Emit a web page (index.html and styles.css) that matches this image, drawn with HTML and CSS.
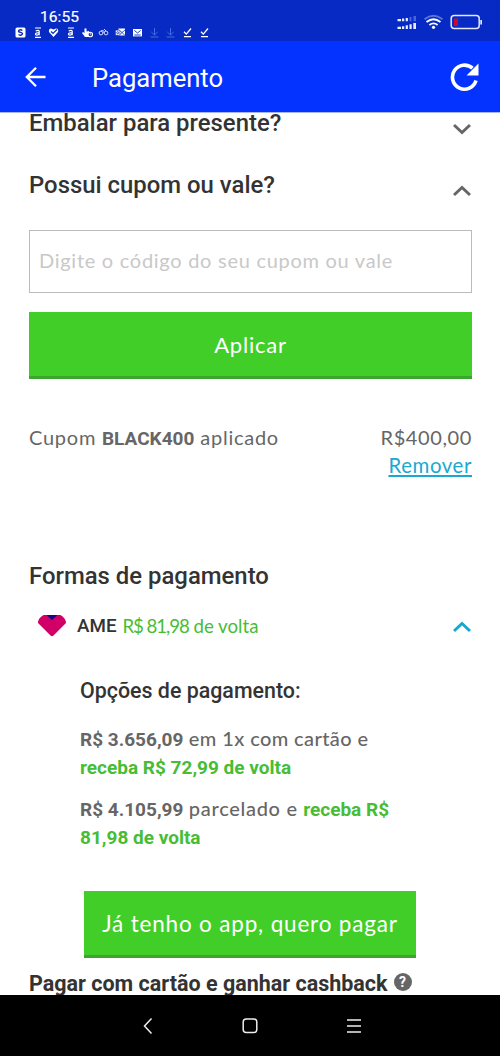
FILE: index.html
```html
<!DOCTYPE html>
<html lang="pt-BR">
<head>
<meta charset="utf-8">
<title>Pagamento</title>
<link rel="stylesheet" href="styles.css">
</head>
<body>
<div class="screen">
  <div class="status">
    <div class="status-left">
      <div class="clock">16:55</div>
      <div class="notifications">
        <svg viewBox="0 0 11 11"><rect x=".5" y=".5" width="10" height="10" rx="1.5" fill="#fff"/><path d="M7.4 3.5Q5.5 2 4 3.3T5.5 5.4 7 7.6 3.6 7.5" fill="none" stroke="#0b2cb8" stroke-width="1.4"/></svg>
        <svg viewBox="0 0 11 11" fill="none" stroke="#fff"><path d="M3 1h6M3 10.3h6M3.7 4q3.3-1.6 3.5.4v3.8M7.2 5.7Q3.3 5.6 3.5 7.3q1.2 1.7 3.7-.4" stroke-width="1.2"/></svg>
        <svg viewBox="0 0 11 11"><path d="M5.5 10 1 5Q.5 1.5 3 1.5l2.5 1 2.5-1q3 0 2 3.5z" fill="#fff"/><path d="M3 4.5 5 6.5 9 2.5" fill="none" stroke="#0b2cb8" stroke-width="1.2"/></svg>
        <svg viewBox="0 0 11 11" fill="none" stroke="#fff"><path d="M3 1h6M3 10.3h6M3.7 4q3.3-1.6 3.5.4v3.8M7.2 5.7Q3.3 5.6 3.5 7.3q1.2 1.7 3.7-.4" stroke-width="1.2"/></svg>
        <svg viewBox="0 0 11 11"><path d="M2.5 1.5h2v3L7 4l1 6H3L0 6l1-1 1.5 1z" fill="#fff"/><circle cx="8.3" cy="7.5" r="2.3" fill="#0b2cb8" stroke="#fff" stroke-width="1.1"/><path d="M8.3 6v1.6h1" fill="none" stroke="#fff" stroke-width=".7"/></svg>
        <svg viewBox="0 0 11 11" fill="none" stroke="#ced8fa"><circle cx="3" cy="6" r="1.9"/><circle cx="8" cy="6" r="1.9"/><path d="M3 4q3-2 3 2M6 2l2 2"/></svg>
        <svg viewBox="0 0 11 11"><path d="M3.5 1.5H10v7H3.5z" fill="#fff"/><path d="m4 3 3 2.5L10 3M4 8.5l3-3 3 3" fill="none" stroke="#0b2cb8" stroke-width=".8"/><path d="M.5 3.2h4.3v5H.5z" fill="#fff" stroke="#0b2cb8" stroke-width=".5"/><circle cx="2.7" cy="5.7" r="1" fill="none" stroke="#0b2cb8" stroke-width=".8"/></svg>
        <svg viewBox="0 0 11 11"><rect x="1" y="2" width="9" height="7.4" fill="#fff"/><path d="M2.3 3.4l3.2 2.6 3.200-2.600M2.300 8h6.400" fill="none" stroke="#0b2cb8" stroke-width=".9"/></svg>
        <svg class="dim" viewBox="0 0 11 11" fill="none" stroke="#5282ee"><path d="M5.5 1v7M2.3 5l3.2 3 3.2-3M1.5 10h8"/></svg>
        <svg class="dim" viewBox="0 0 11 11" fill="none" stroke="#5282ee"><path d="M5.5 1v7M2.3 5l3.2 3 3.2-3M1.5 10h8"/></svg>
        <svg viewBox="0 0 11 11" fill="none" stroke="#fff" stroke-width="1.3"><path d="m2 4.7 2.3 2.4L9 1.5M2 9.7h7"/></svg>
        <svg viewBox="0 0 11 11" fill="none" stroke="#fff" stroke-width="1.3"><path d="m2 4.7 2.3 2.4L9 1.5M2 9.7h7"/></svg>
      </div>
    </div>
    <svg class="indicators" width="86" height="18" viewBox="0 0 86 18">
      <g fill="#e8edff"><path d="M.5 6H4v2.300H.5zM5 5.500h2.200v2.800H5zM8.700 5h2.200v3.300H8.700z"/><path opacity=".3" d="M12.500 4h2v4.300h-2zM16.500 3H19v5.300h-2.500z"/><path d="M.5 13.800H4V16H.5zM5 13.300h2.200V16H5zM8.700 12.300h2.200V16H8.700zM12.500 11.300h2.200V16h-2.200zM16.300 10h2.700v6h-2.700z"/></g>
      <g fill="none" stroke="#fff" stroke-width="1.8"><path opacity=".35" d="M27.500 6.300q9-7 18 0"/><path d="M29.500 9q7-5.500 14 0M32.400 12q4.100-3.200 8.200 0"/></g><circle cx="36.500" cy="14.300" r="1.6" fill="#fff"/>
      <rect x="54.200" y="2.500" width="28" height="13" rx="3" fill="none" stroke="#e4e8ff" stroke-width="1.500"/><path d="M83.300 7H85v4.500h-1.700z" fill="#dfe5ff"/><path d="M57 5.500h4V13h-4z" fill="#c60b2c"/>
    </svg>
  </div>
  <header class="appbar">
    <svg width="22" height="22" viewBox="0 0 22 22" fill="none" stroke="#fff" stroke-width="2.300"><path d="M20.500 11H2.500M11 1.800 1.800 11l9.200 9.200"/></svg>
    <h1 class="title">Pagamento</h1>
    <svg width="30" height="30" viewBox="0 0 30 30"><path d="M26 18.500A12 12 0 1 1 22.500 6.200" fill="none" stroke="#fff" stroke-width="3.600"/><path d="M28.500 1.500V13.500H16.500z" fill="#fff"/></svg>
  </header>
  <main class="content">
    <div class="accordion first"><h2 class="heading">Embalar para presente?</h2><svg class="chevron" viewBox="0 0 18 12"><path d="m1 2 8 7.500L17 2"/></svg></div>
    <div class="accordion second"><h2 class="heading">Possui cupom ou vale?</h2><svg class="chevron" viewBox="0 0 18 12"><path d="m1 10 8-7.500L17 10"/></svg></div>
    <div class="field">Digite o código do seu cupom ou vale</div>
    <div class="button apply">Aplicar</div>
    <div class="applied">
      <div class="coupon">Cupom <b>BLACK400</b> aplicado</div>
      <div class="amount"><span>R$400,00</span><a class="remove">Remover</a></div>
    </div>
    <h2 class="heading">Formas de pagamento</h2>
    <div class="method">
      <svg width="28" height="22" viewBox="0 0 28 22"><path d="M5.500 0h17Q28 3.500 28 8L15.500 20.500q-1.500 1.500-3 0L0 8Q0 3 5.500 0z" fill="#d00066"/><path d="M8.500 0h11l-5.500 5z" fill="#15068f"/></svg>
      <span class="ame">AME</span><span class="refund"><span class="refund-price">R$ 81,98</span> de volta</span>
      <svg class="chevron blue" viewBox="0 0 18 12"><path d="m1 10 8-7.500L17 10"/></svg>
    </div>
    <section class="options">
      <h3 class="options-title">Opções de pagamento:</h3>
      <p class="option"><b>R$ 3.656,09</b> em 1x com cartão e<br><b class="gain">receba R$ 72,99 de volta</b></p>
      <p class="option"><b>R$ 4.105,99</b> <span class="split">parcelado e</span> <b class="gain">receba R$<br>81,98 de volta</b></p>
    </section>
    <div class="button pay">Já tenho o app, quero pagar</div>
    <div class="cashback"><span>Pagar com cartão e ganhar cashback</span><i class="help">?</i></div>
  </main>
  <nav class="nav">
    <svg width="220" height="18" viewBox="0 0 220 18" fill="none" stroke="#eee" stroke-width="1.500"><path d="m9.500 1.500-7 7.500 7 7.500"/><rect x="101.200" y="2" width="13.600" height="13.600" rx="3"/><path d="M205 3h14M205 9h14M205 15h14"/></svg>
  </nav>
</div>
</body>
</html>
```
FILE: styles.css
```css
* { box-sizing: border-box; }
body { margin: 0; background: #fff; font-family: Lato, sans-serif; color: #333; }
h1, h2, h3, p { margin: 0; font-weight: 500; }
svg { display: block; flex: none; }
.screen { width: 500px; height: 1056px; display: flex; flex-direction: column; overflow: hidden; }
.status { height: 41px; flex: none; background: #062ac3; display: flex; justify-content: space-between; padding: 0 17px 0 15px; }
.clock { height: 27px; padding: 8px 0 0 25px; font: 400 15.5px/19px Roboto, sans-serif; color: #fff; letter-spacing: .1px; -webkit-text-stroke: .2px #fff; }
.notifications { display: flex; gap: 5.7px; }
.notifications svg { width: 11px; height: 11px; }
.dim { opacity: .75; }
.indicators { margin-top: 13px; }
.appbar { height: 71px; flex: none; background: #0433ff; display: flex; align-items: center; padding: 0 20px 0 25px; }
.title { flex: 1; margin-left: 45px; padding-top: 2px; font: 400 25.6px/30px Roboto, sans-serif; color: #fff; }
.content { height: 883px; flex: none; border-top: 1px solid #a7b5ff; padding: 0 28px 0 29px; }
.heading { font: 500 23.9px/30px Roboto, sans-serif; }
.accordion { display: flex; justify-content: space-between; height: 62px; padding-right: 1px; }
.accordion.first { height: 58px; }
.first .heading { margin-top: -5px; }
.second .heading { margin-top: -1px; }
.first .chevron { margin-top: 10px; }
.second .chevron { margin-top: 14px; }
.chevron { width: 18px; height: 12px; fill: none; stroke: #666; stroke-width: 3; }
.field { height: 63px; margin-top: -3px; border: 1px solid #bbb; padding-left: 9px; font-size: 20px; line-height: 59px; letter-spacing: .72px; color: #c8c8c8; white-space: nowrap; }
.button { height: 67px; background: #42ce29; border-bottom: 3px solid #3ba62e; color: #fff; font-size: 22px; line-height: 65px; letter-spacing: .8px; text-align: center; white-space: nowrap; }
.apply { margin-top: 19px; }
.applied { display: flex; justify-content: space-between; margin-top: 44px; height: 138px; font-size: 20px; line-height: 28px; letter-spacing: .75px; color: #666; white-space: nowrap; }
.applied b, .option b { font: 700 19px/1 Roboto, sans-serif; letter-spacing: 0; }
.amount { display: flex; flex-direction: column; align-items: flex-end; letter-spacing: .6px; }
.remove { font-size: 20.4px; color: #1ba8d0; text-decoration: underline; text-underline-offset: 2px; }
.method { display: flex; align-items: center; height: 30px; margin-top: 20px; padding: 0 1px 0 9px; font: 500 18.8px/30px Roboto, sans-serif; }
.ame { margin-left: 11px; }
.refund { margin-left: 6px; font: 400 18.7px/30px Lato, sans-serif; color: #47bd35; }
.refund-price { letter-spacing: -1.1px; }
.blue { stroke: #12a9d2; margin: 2px 0 0 auto; }
.options { margin-left: 51px; padding-top: 35px; white-space: nowrap; }
.options-title { font: 500 21.4px/30px Roboto, sans-serif; }
.option { margin-top: 14px; font-size: 20px; line-height: 28px; letter-spacing: .4px; color: #666; }
.options-title + .option { margin-top: 18px; }
.split { letter-spacing: .7px; }
.option .gain { color: #47bd35; }
.pay { width: 332px; margin: 41px 0 0 55px; font-size: 22.5px; letter-spacing: .82px; }
.cashback { display: flex; align-items: center; gap: 6px; margin-top: 11px; font: 700 21.5px/30px Roboto, sans-serif; white-space: nowrap; }
.help { width: 18px; height: 18px; margin-top: -5px; border-radius: 50%; background: #666; color: #fff; font: 700 14px/18px Roboto, sans-serif; text-align: center; }
.nav { height: 61px; flex: none; background: #000; padding: 22px 0 0 142px; }
```
